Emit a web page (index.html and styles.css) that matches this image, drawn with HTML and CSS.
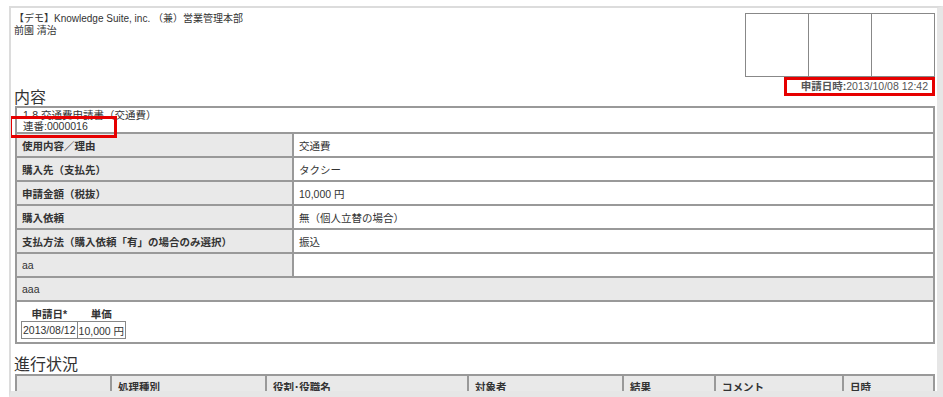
FILE: index.html
```html
<!DOCTYPE html>
<html lang="ja">
<head>
    <meta charset="UTF-8">
    <title>交通費申請書</title>
    <link rel="stylesheet" href="styles.css">
</head>
<body>

<div class="frame">
    <div class="head">
        <div class="head-left">
            <div class="owner">
                <div>【デモ】Knowledge Suite, inc. （兼）営業管理本部</div>
                <div>前園 清治</div>
            </div>
            <h2 class="section-title">内容</h2>
        </div>
        <div class="head-right">
            <table class="stamps">
                <tr><td></td><td></td><td></td></tr>
            </table>
            <div class="applied-at"><b>申請日時:</b>2013/10/08 12:42</div>
        </div>
    </div>

    <div class="detail-wrap">
        <span class="mark-serial"></span>
        <table class="detail">
            <tr class="title-row">
                <td colspan="2">1-8 交通費申請書（交通費）<br>連番:0000016</td>
            </tr>
            <tr><th>使用内容／理由</th><td>交通費</td></tr>
            <tr><th>購入先（支払先）</th><td>タクシー</td></tr>
            <tr><th>申請金額（税抜）</th><td>10,000 円</td></tr>
            <tr><th>購入依頼</th><td>無（個人立替の場合）</td></tr>
            <tr><th>支払方法（購入依頼「有」の場合のみ選択）</th><td>振込</td></tr>
            <tr><th class="plain">aa</th><td></td></tr>
            <tr><th class="plain" colspan="2">aaa</th></tr>
            <tr class="items-row">
                <td colspan="2">
                    <table class="items">
                        <tr><th>申請日*</th><th>単価</th></tr>
                        <tr><td>2013/08/12</td><td>10,000 円</td></tr>
                    </table>
                </td>
            </tr>
        </table>
    </div>

    <h2 class="section-title progress-title">進行状況</h2>
    <table class="progress">
        <tr>
            <th class="c1"></th>
            <th class="c2">処理種別</th>
            <th class="c3">役割･役職名</th>
            <th class="c4">対象者</th>
            <th class="c5">結果</th>
            <th class="c6">コメント</th>
            <th class="c7">日時</th>
        </tr>
    </table>
</div>

</body>
</html>
```

FILE: styles.css
```css
body {
    margin: 0;
    font-family: "Liberation Sans", "Noto Sans CJK JP", sans-serif;
    font-size: 10.5px;
    color: #333;
    background-color: #fff;
}
.frame {
    margin: 6px 0 0 9px;
    height: 383px;
    overflow: hidden;
    border-style: solid;
    border-color: #dcdcdc #e6e6e6 #e6e6e6 #dcdcdc;
    border-width: 2px 6px 6px 2px;
}
.head {
    display: flex;
    justify-content: space-between;
    padding: 5px 2px 0 3px;
}
.head-left {
    display: flex;
    flex-direction: column;
    justify-content: space-between;
}
.owner {
    font-size: 10px;
    line-height: 12px;
}
.section-title {
    margin: 0;
    font-size: 16px;
    font-weight: normal;
    line-height: 20px;
    font-family: "Noto Sans CJK JP", sans-serif;
    color: #333;
}
.head-right {
    display: flex;
    flex-direction: column;
    align-items: flex-end;
    margin-bottom: 10px;
}
.stamps {
    border-collapse: collapse;
}
.stamps td {
    width: 62px;
    height: 62px;
    padding: 0;
    border: 1px solid #888;
}
.applied-at {
    height: 13px;
    line-height: 13px;
    padding: 0 4px 0 14px;
    border: 3px solid #e60000;
    color: #555;
}
.detail-wrap {
    position: relative;
    margin: 0 2px 0 4px;
}
.mark-serial {
    position: absolute;
    left: -6px;
    top: 10px;
    width: 102px;
    height: 16px;
    border: 3px solid #e60000;
}
.detail {
    width: 100%;
    border: 1px solid #999;
    border-spacing: 0;
}
.detail th,
.detail td {
    height: 22px;
    padding: 0 5px;
    border: 1px solid #999;
    text-align: left;
    vertical-align: middle;
}
.detail th {
    width: 265px;
    background-color: #e9e9e9;
    font-weight: bold;
}
.detail th.plain {
    font-weight: normal;
}
.title-row td {
    height: 23px;
    line-height: 11px;
    padding: 1px 6px 0;
}
.items-row td {
    height: 40px;
    padding: 0 4px;
}
.items {
    border-collapse: collapse;
}
.items th,
.items td {
    width: auto;
    height: 16px;
    padding: 0 1px;
    background: none;
    border: 1px solid #888;
    white-space: nowrap;
}
.items th {
    border: none;
    text-align: center;
    font-weight: bold;
    padding: 0 9px;
}
.progress-title {
    margin: 9px 0 0 3px;
}
.progress {
    margin: 1px 2px 0 4px;
    width: 920px;
    border: 1px solid #999;
    border-spacing: 0;
    table-layout: fixed;
}
.progress th {
    box-sizing: border-box;
    height: 24px;
    padding: 3px 6px 0;
    border: 1px solid #999;
    background-color: #e9e9e9;
    text-align: left;
    vertical-align: top;
    font-weight: bold;
}
.c1 { width: 95px; }
.c2 { width: 155px; }
.c3 { width: 202px; }
.c4 { width: 155px; }
.c5 { width: 92px; }
.c6 { width: 128px; }
```
